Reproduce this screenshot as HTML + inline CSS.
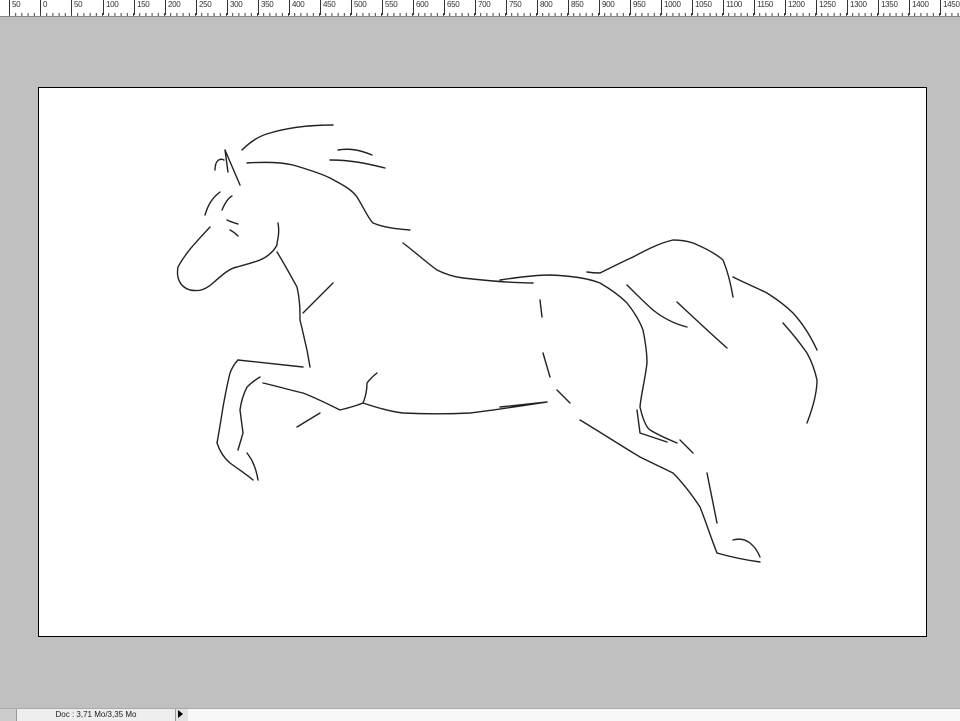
<!DOCTYPE html>
<html><head><meta charset="utf-8"><style>
html,body{margin:0;padding:0;width:960px;height:720px;overflow:hidden;background:#c0c0c0;font-family:"Liberation Sans",sans-serif}
#ruler{position:absolute;left:0;top:0;width:960px;height:16px;background:#fff;border-bottom:1px solid #888}
#ruler span{position:absolute;top:0;font-size:8px;color:#333;letter-spacing:-0.3px;padding-left:2px;border-left:1px solid #333;height:15px;line-height:10px}
#canvas{position:absolute;left:38px;top:87px;width:887px;height:548px;background:#fff;border:1px solid #000}
#status{position:absolute;left:0;top:708px;width:960px;height:12px;background:#e4e4e4;border-top:1px solid #aaa;font-size:8px;color:#222}
</style></head><body>
<div id="ruler">
<span style="left:9px">50</span><span style="left:40px">0</span><span style="left:71px">50</span><span style="left:103px">100</span><span style="left:134px">150</span><span style="left:165px">200</span><span style="left:196px">250</span><span style="left:227px">300</span><span style="left:258px">350</span><span style="left:289px">400</span><span style="left:320px">450</span><span style="left:351px">500</span><span style="left:382px">550</span><span style="left:413px">600</span><span style="left:444px">650</span><span style="left:475px">700</span><span style="left:506px">750</span><span style="left:537px">800</span><span style="left:568px">850</span><span style="left:599px">900</span><span style="left:630px">950</span><span style="left:661px">1000</span><span style="left:692px">1050</span><span style="left:723px">1100</span><span style="left:754px">1150</span><span style="left:785px">1200</span><span style="left:816px">1250</span><span style="left:847px">1300</span><span style="left:878px">1350</span><span style="left:909px">1400</span><span style="left:940px">1450</span>
<svg width="960" height="16" style="position:absolute;left:0;top:0"><g stroke="#444"><path id="t" d=""/></g></svg>
</div>
<script>
(function(){var s='';for(var x=9.5;x<960;x+=6.2){s+='M'+x.toFixed(1)+' 16v-3';}
document.getElementById('t').setAttribute('d',s);})();
</script>
<div id="canvas"></div>
<svg width="960" height="720" style="position:absolute;left:0;top:0" fill="none" stroke="#222" stroke-width="1.4" stroke-linecap="round" stroke-linejoin="round">
<path d="M210 227C198 240 186 252 178 267C176 278 180 287 190 290C196 291 203 292 213 283C222 275 230 268 237 267C248 264 255 262 260 260C272 255 278 245 277 243C279 235 279 228 278 223"/>
<path d="M225 150L240 185M225 150L228 172M215 170C215 160 220 158 224 160"/>
<path d="M242 150C252 140 262 135 270 133C290 127 310 125 333 125"/>
<path d="M247 163C262 162 280 162 293 165C310 170 322 174 330 178C345 186 352 190 357 197C365 210 368 218 373 223C385 228 398 229 410 230"/>
<path d="M403 243C415 252 426 262 437 270C447 275 455 277 463 278C490 281 515 283 533 283"/>
<path d="M500 280C520 277 535 275 550 275C575 276 590 279 600 283C612 290 620 296 627 303C635 313 640 322 643 330C646 345 647 355 647 363C645 380 641 395 640 407C643 420 646 427 650 430C660 436 670 440 677 443"/>
<path d="M587 272C593 273 597 273 600 273C612 267 622 262 633 257C648 249 660 243 673 240C680 240 687 241 693 243C705 248 715 253 723 260C728 272 731 285 733 297"/>
<path d="M733 277C745 283 757 288 767 293C778 300 786 306 793 313C804 325 811 337 817 350"/>
<path d="M783 323C792 333 800 343 807 353C812 362 815 371 817 380C817 395 812 410 807 423"/>
<path d="M627 285C636 294 645 303 653 310C663 318 675 324 687 327M677 302C693 317 710 333 727 348"/>
<path d="M580 420C600 432 620 445 640 457C652 463 663 468 673 473C683 483 692 495 700 507C706 522 711 538 717 553C731 557 745 560 760 562"/>
<path d="M707 473L717 523M733 540C740 538 746 540 750 543C755 547 758 552 760 557M637 410L640 433L667 442M680 440L693 453"/>
<path d="M363 403C378 408 392 412 403 413C425 414 450 414 470 413C495 410 520 406 547 402M500 407L547 402"/>
<path d="M540 300L542 317M543 353L550 377M557 390L570 403"/>
<path d="M277 252C285 265 292 278 297 287C300 300 300 310 300 320C303 332 305 342 307 350L310 367M333 283L303 313"/>
<path d="M238 360L303 367"/>
<path d="M238 360C234 364 232 368 230 373C227 385 225 396 223 407C221 420 219 432 217 443C220 452 224 458 230 463C238 469 246 474 253 480"/>
<path d="M260 377C255 380 250 384 247 387C243 395 241 402 240 410C241 418 242 425 243 433L238 450M247 453C250 457 252 460 253 463C256 469 257 474 258 480"/>
<path d="M263 383C276 386 290 390 303 393C316 398 328 404 340 410C348 408 356 406 363 403C366 396 367 390 367 383C370 379 373 376 377 373M297 427L320 413"/>
<path d="M227 220C231 222 235 223 238 224M230 230C234 232 236 234 238 236M205 215C208 205 212 198 220 192M222 210C225 203 228 198 232 196"/>
<path d="M338 150C350 148 360 150 372 155M330 160C350 160 365 163 385 168"/>
</svg>
<div id="status">
<div style="position:absolute;left:0;top:0;width:16px;height:12px;border-right:1px solid #999;background:#ccc"></div>
<div style="position:absolute;left:17px;top:0;width:158px;height:12px;background:#eee;border-right:1px solid #999;text-align:center;line-height:12px">Doc : 3,71 Mo/3,35 Mo</div>
<div style="position:absolute;left:178px;top:1px;width:0;height:0;border-left:5px solid #000;border-top:4px solid transparent;border-bottom:4px solid transparent"></div>
<div style="position:absolute;left:188px;top:0;width:772px;height:12px;background:#f8f8f8"></div>
</div>
</body></html>
